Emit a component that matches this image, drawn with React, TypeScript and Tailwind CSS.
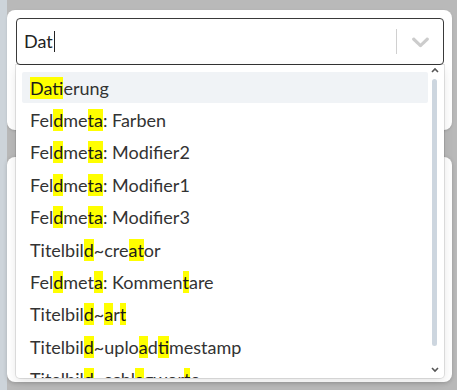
import React from 'react'

const OPTIONS = [
  '[Dati]erung',
  'Fel[d]me[ta]: Farben',
  'Fel[d]me[ta]: Modifier2',
  'Fel[d]me[ta]: Modifier1',
  'Fel[d]me[ta]: Modifier3',
  'Titelbil[d]~cre[at]or',
  'Fel[d]met[a]: Kommen[t]are',
  'Titelbil[d]~[a]r[t]',
  'Titelbil[d]~uplo[a]d[ti]mestamp',
  'Titelbil[d]~schl[a]gwor[t]e',
]

// "Fel[d]me[ta]" -> segments, bracketed parts get the yellow match highlight
const Highlighted = ({ label }: { label: string }) => {
  const parts = label.split(/[[\]]/)
  return (
    <span>
      {parts.map((p, i) =>
        i % 2 === 1 ? (
          <span key={i} className="bg-[#ffff00] text-[#1a1a1a]">
            {p}
          </span>
        ) : (
          <span key={i}>{p}</span>
        ),
      )}
    </span>
  )
}

const Chevron = ({ className }: { className?: string }) => (
  <svg viewBox="0 0 20 20" className={className} fill="currentColor">
    <path d="M4.516 7.548c0.436-0.446 1.043-0.481 1.576 0l3.908 3.747 3.908-3.747c0.533-0.481 1.141-0.446 1.574 0 0.436 0.445 0.408 1.197 0 1.615-0.406 0.418-4.695 4.502-4.695 4.502-0.217 0.223-0.502 0.335-0.787 0.335s-0.57-0.112-0.789-0.335c0 0-4.287-4.084-4.695-4.502s-0.436-1.17 0-1.615z" />
  </svg>
)

const Menu = () => (
  <div className="absolute left-0 top-full z-20 flex h-[313px] w-[428px] overflow-hidden rounded-b-[4px] bg-white shadow-[0_0_0_1px_rgba(0,0,0,0.1),0_4px_11px_rgba(0,0,0,0.1)]">
    <div className="flex flex-1 flex-col gap-[1.4px] pl-[6px] pt-[7px]">
      {OPTIONS.map((o, i) => (
        <div
          key={o}
          className={`flex h-[31px] shrink-0 items-center rounded-[2px] pl-[8px] pt-[2px] text-[18px] leading-[21.6px] text-[#333] ${
            i === 0 ? 'bg-[#f0f3f6]' : ''
          }`}
        >
          <Highlighted label={o} />
        </div>
      ))}
    </div>
    <div className="flex w-[16px] flex-col items-center pr-[3px] pt-[2px]">
      <svg viewBox="0 0 8 6" className="h-[6px] w-[8px] text-[#555]">
        <path d="M1 5 L4 2 L7 5" fill="none" stroke="currentColor" strokeWidth="1.6" />
      </svg>
      <div className="mt-[6px] h-[267px] w-[5px] rounded-full bg-[#cdd6df]" />
      <svg viewBox="0 0 8 6" className="mt-[21px] h-[6px] w-[8px] text-[#555]">
        <path d="M1 1 L4 4 L7 1" fill="none" stroke="currentColor" strokeWidth="1.6" />
      </svg>
    </div>
  </div>
)

const App = () => (
  <div className="flex h-[390px] w-[457px] overflow-hidden bg-[#b9b9b9] font-['Lato',sans-serif]">
    <div className="w-[7px] shrink-0 bg-[#cdd4da]" />
    <div className="flex w-[445px] flex-col pt-[10px]">
      <div className="relative z-10 h-[120px] rounded-[8px] bg-white pl-[9px] pr-[8px] pt-[8px] shadow-sm">
        <div className="relative">
          <div className="flex h-[47px] items-center rounded-[4px] border border-[#3a3a3a] bg-white">
            <div className="flex flex-1 items-center pl-[7px] text-[18px] text-[#222]">
              <span>Dat</span>
              <span className="ml-[1px] h-[21px] w-[1px] bg-[#222]" />
            </div>
            <div className="h-[25px] w-[1px] bg-[#d0d0d0]" />
            <div className="flex w-[46px] items-center justify-center text-[#cccccc]">
              <Chevron className="h-[29px] w-[29px]" />
            </div>
          </div>
          <Menu />
        </div>
      </div>
      <div className="mt-[27px] h-[225px] rounded-[8px] bg-white shadow-[0_1px_4px_rgba(0,0,0,0.18)]" />
    </div>
  </div>
)

export default App
